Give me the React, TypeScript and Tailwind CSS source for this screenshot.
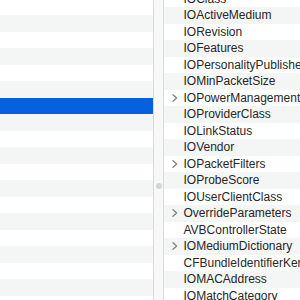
import React from 'react';

const keys: { name: string; expandable?: boolean }[] = [
  { name: 'IOClass' },
  { name: 'IOActiveMedium' },
  { name: 'IORevision' },
  { name: 'IOFeatures' },
  { name: 'IOPersonalityPublisher' },
  { name: 'IOMinPacketSize' },
  { name: 'IOPowerManagement', expandable: true },
  { name: 'IOProviderClass' },
  { name: 'IOLinkStatus' },
  { name: 'IOVendor' },
  { name: 'IOPacketFilters', expandable: true },
  { name: 'IOProbeScore' },
  { name: 'IOUserClientClass' },
  { name: 'OverrideParameters', expandable: true },
  { name: 'AVBControllerState' },
  { name: 'IOMediumDictionary', expandable: true },
  { name: 'CFBundleIdentifierKernel' },
  { name: 'IOMACAddress' },
  { name: 'IOMatchCategory' },
];

const Chevron = () => (
  <svg width="6" height="8" viewBox="0 0 6 8" className="absolute left-[7.5px] top-1/2 -translate-y-1/2">
    <path d="M1 0.7 L4.6 4 L1 7.3" fill="none" stroke="#7d7d7d" strokeWidth="1.2" strokeLinecap="round" strokeLinejoin="round" />
  </svg>
);

export default function App() {
  return (
    <div className="flex h-[300px] w-[300px] overflow-hidden bg-white" style={{ fontFamily: '"Liberation Sans", Arial, sans-serif' }}>
      <div className="w-[153px] shrink-0 -mt-[1.5px]">
        {Array.from({ length: 20 }).map((_, i) => (
          <div
            key={i}
            className={
              i === 6
                ? 'h-[16.5px] bg-[#0760dd]'
                : i % 2 === 1
                ? 'h-[16.5px] bg-[#f4f5f5]'
                : 'h-[16.5px] bg-white'
            }
          />
        ))}
      </div>
      <div className="relative w-[11px] shrink-0 border-x border-[#dadada] bg-[#f8f8f8]">
        <div className="absolute left-[2px] top-[183px] h-[6px] w-[6px] rounded-full bg-[#d4d4d4]" />
      </div>
      <div className="min-w-0 flex-1 -mt-[9.5px]">
        {keys.map((k, i) => (
          <div
            key={k.name}
            className={`relative flex h-[16.5px] items-center whitespace-nowrap pl-[19.5px] text-[12px] text-[#262626] ${
              i % 2 === 1 ? 'bg-[#f4f5f5]' : 'bg-white'
            }`}
          >
            {k.expandable && <Chevron />}
            {k.name}
          </div>
        ))}
      </div>
    </div>
  );
}
